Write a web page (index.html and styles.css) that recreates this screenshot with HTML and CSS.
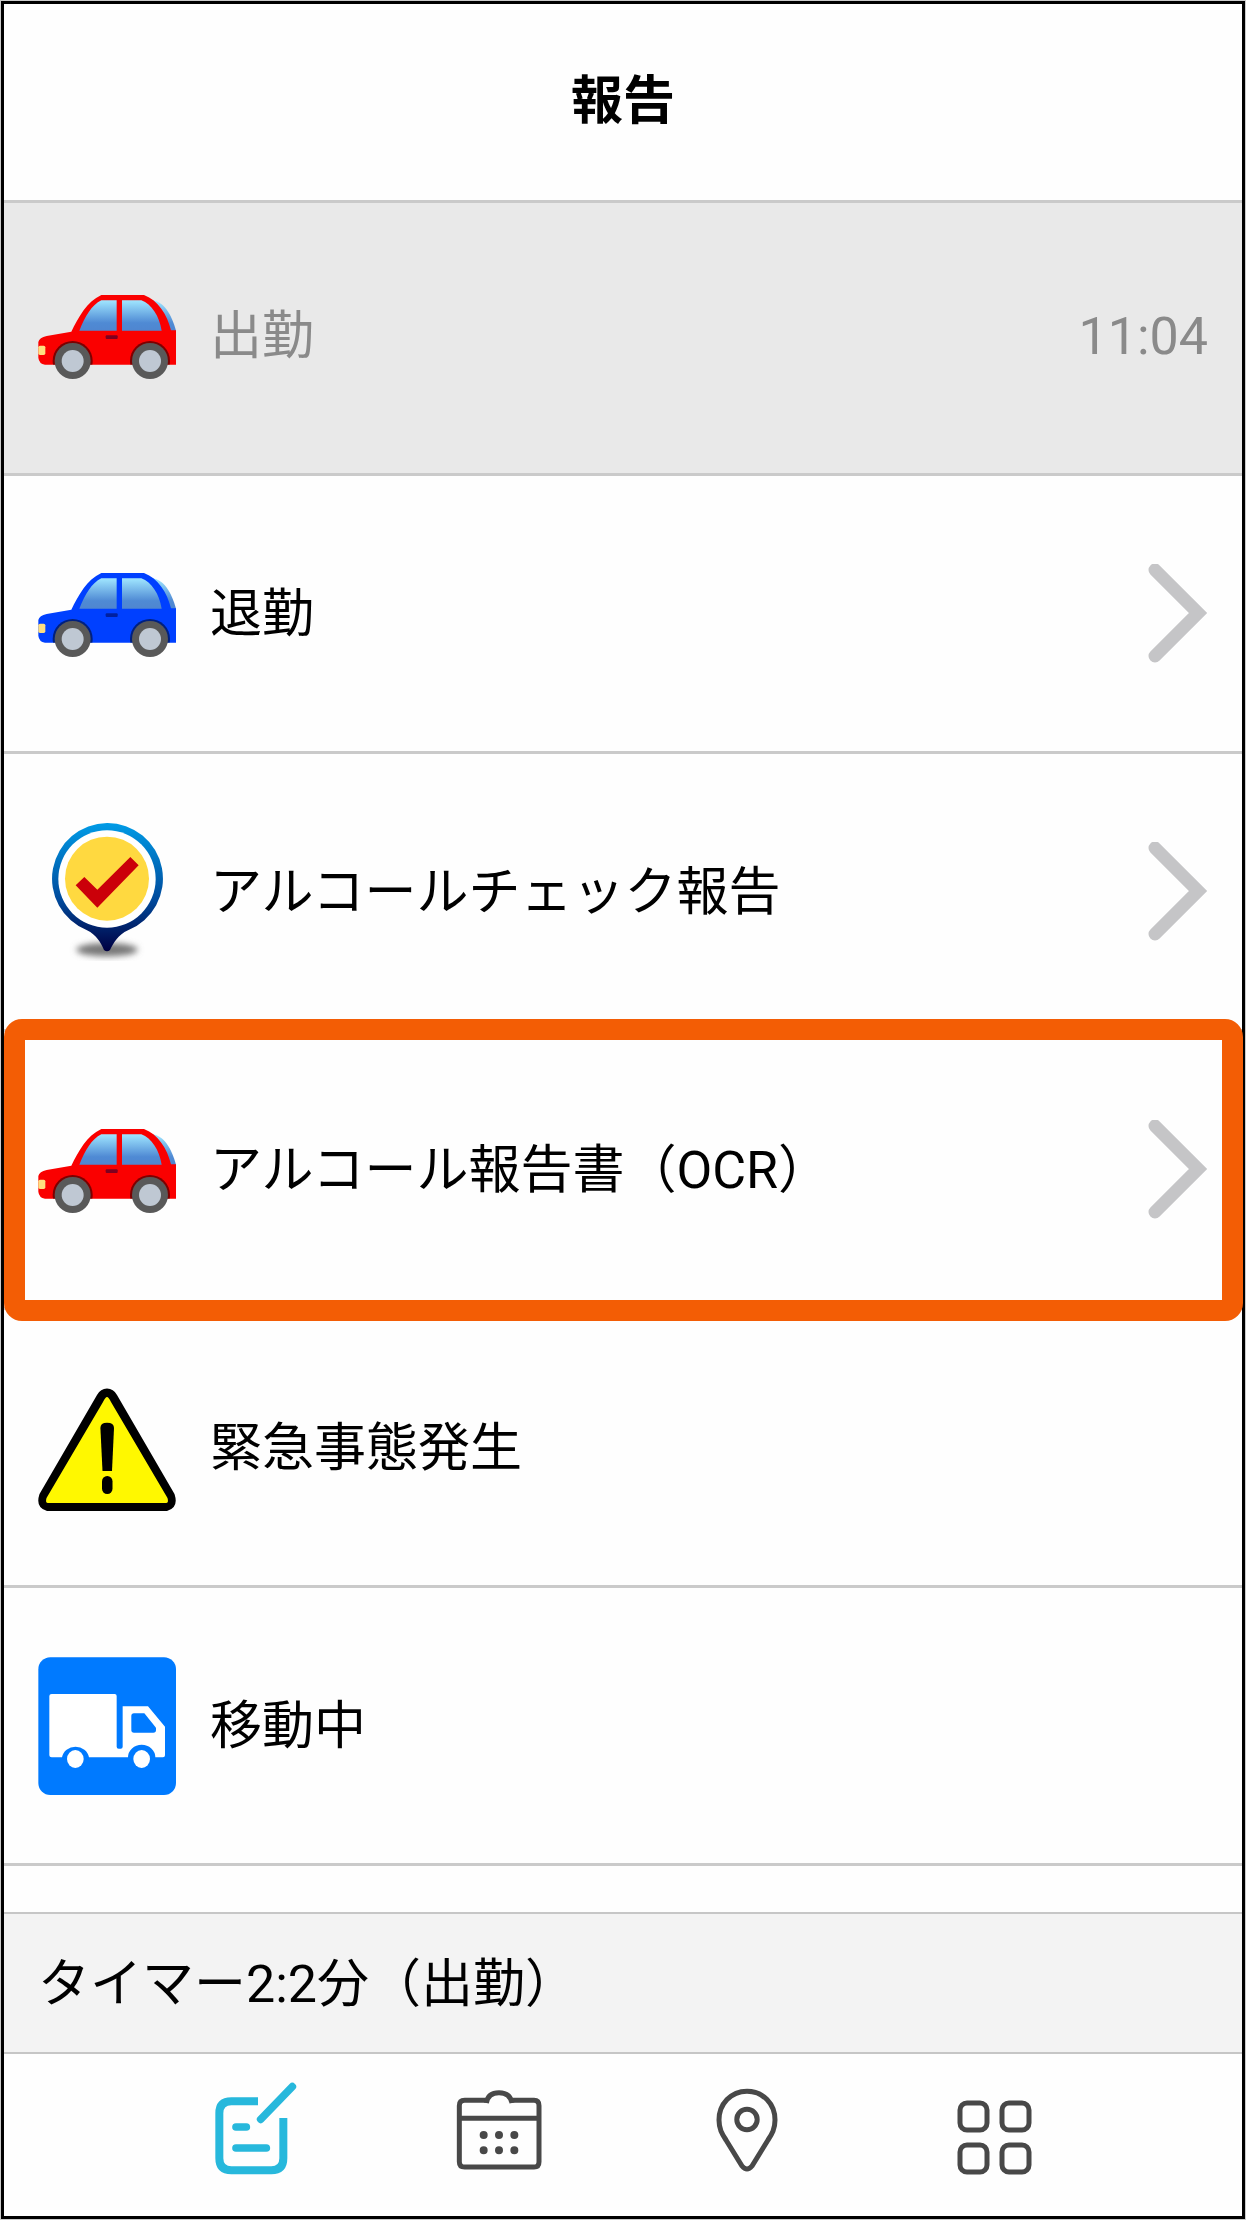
FILE: index.html
```html
<!DOCTYPE html>
<html lang="ja">
<head>
<meta charset="utf-8">
<meta name="viewport" content="width=device-width, initial-scale=1">
<title>報告</title>
<link rel="stylesheet" href="styles.css">
</head>
<body>
<svg class="defs" aria-hidden="true">
  <defs>
    <linearGradient id="glass" x1="0" y1="118" x2="0" y2="208" gradientUnits="userSpaceOnUse">
      <stop offset="0" stop-color="#a0e6ff"/>
      <stop offset="0.75" stop-color="#4f8ad4"/>
      <stop offset="1" stop-color="#4f86d0"/>
    </linearGradient>
    <linearGradient id="pin-ring" x1="0" y1="67" x2="0" y2="450" gradientUnits="userSpaceOnUse">
      <stop offset="0" stop-color="#009be6"/>
      <stop offset="0.6" stop-color="#004a9c"/>
      <stop offset="1" stop-color="#000042"/>
    </linearGradient>
    <filter id="soft" x="-30%" y="-80%" width="160%" height="260%"><feGaussianBlur stdDeviation="9"/></filter>
    <clipPath id="car-body"><rect x="115" y="209" width="413" height="102"/></clipPath>
    <symbol id="car" viewBox="114 18 414 414">
      <path d="M455 118 C490 120 515 160 528 210 H500Z" fill="url(#glass)"/>
      <path d="M115 243 Q118 230 140 225 L214 212 C235 170 260 122 304 102 H432 C475 118 502 162 513 208 H528 V311 H135 Q117 308 115 290Z" fill="currentColor"/>
      <path d="M350 118 H304 C275 132 256 165 238 209 H350Z M366 118 H424 C455 130 478 165 485 209 H366Z" fill="url(#glass)"/>
      <rect x="317" y="223" width="36" height="11" rx="3" fill="#000040" opacity="0.5"/>
      <g clip-path="url(#car-body)" fill="#000000" opacity="0.5"><circle cx="218" cy="300" r="60"/><circle cx="450" cy="300" r="60"/></g>
      <g fill="#595959"><circle cx="218" cy="300" r="54"/><circle cx="450" cy="300" r="54"/></g>
      <g fill="#bfc8d3"><circle cx="218" cy="300" r="33"/><circle cx="450" cy="300" r="33"/></g>
      <rect x="115" y="254" width="21" height="28" rx="5" fill="#ffdf80"/>
    </symbol>
    <symbol id="chevron" viewBox="0 0 60 100">
      <path d="M7 6 L50 49 L7 92" fill="none" stroke="#c5c5c7" stroke-width="13" stroke-linecap="round"/>
    </symbol>
  </defs>
</svg>

<div class="screen">
  <header class="header">
    <h1 class="title">報告</h1>
  </header>

  <main class="main">
    <ul class="list">
      <li class="item">
        <button class="row row-done" type="button" disabled>
          <svg class="icon car-red" aria-hidden="true"><use href="#car"/></svg>
          <span class="label">出勤</span>
          <span class="time">11:04</span>
        </button>
      </li>
      <li class="item">
        <button class="row" type="button">
          <svg class="icon car-blue" aria-hidden="true"><use href="#car"/></svg>
          <span class="label">退勤</span>
          <svg class="chevron" aria-hidden="true"><use href="#chevron"/></svg>
        </button>
      </li>
      <li class="item">
        <button class="row" type="button">
          <svg class="icon" viewBox="115 67 414 414" aria-hidden="true">
            <ellipse cx="322" cy="447" rx="92" ry="20" fill="#777777" filter="url(#soft)"/>
            <path d="M322 67 A167 167 0 0 1 385 389 C355 403 343 425 331 448 Q322 456 313 448 C303 425 290 403 262 389 A167 167 0 0 1 322 67Z" fill="url(#pin-ring)"/>
            <circle cx="322" cy="235" r="146" fill="#ffffff"/>
            <circle cx="322" cy="234" r="126" fill="#ffd940"/>
            <path d="M228 254 L254 229 L293 267 L392 169 L417 194 L293 321Z" fill="#cb0009"/>
          </svg>
          <span class="label">アルコールチェック報告</span>
          <svg class="chevron" aria-hidden="true"><use href="#chevron"/></svg>
        </button>
      </li>
      <li class="item item-marked">
        <button class="row" type="button">
          <svg class="icon car-red" aria-hidden="true"><use href="#car"/></svg>
          <span class="label">アルコール報告書（OCR）</span>
          <svg class="chevron" aria-hidden="true"><use href="#chevron"/></svg>
        </button>
      </li>
      <li class="item">
        <button class="row" type="button">
          <svg class="icon" viewBox="0 0 138 138" aria-hidden="true">
            <path d="M69 9.5 Q75.5 9.5 79 16 L136.5 115 Q141 129 129 132 H9 Q-3 129 1.500 115 L59 16 Q62.500 9.500 69 9.500Z" fill="#000000"/>
            <path d="M69 18 Q70.500 18 73 23 L129.500 119 Q131 124 128 124 H10 Q7 124 8.500 119 L65 23 Q67.500 18 69 18Z" fill="#fff800"/>
            <path d="M62.400 49 Q62.400 43.700 69 43.700 Q76 43.700 76 49 L74 92 H64.500Z" fill="#000000"/>
            <rect x="64" y="97" width="10.500" height="18" rx="5.200" fill="#000000"/>
          </svg>
          <span class="label">緊急事態発生</span>
        </button>
      </li>
      <li class="item">
        <button class="row" type="button">
          <svg class="icon" viewBox="114 53 414 414" aria-hidden="true">
            <rect x="115" y="54" width="413" height="413" rx="36" fill="#007aff"/>
            <path d="M155 164 H344 Q350 164 350 170 V322 Q350 328 356 328 H362 Q368 328 368 322 V201 H444 L495 262 V348 Q495 354 489 354 H466 A41 38 0 0 0 384 354 H267 A41 38 0 0 0 186 354 H155 Q148 354 148 348 V170 Q148 164 155 164Z" fill="#ffffff"/>
            <path d="M402 222 H433 L468 265 V272 Q468 280 460 280 H402 Q394 280 394 272 V230 Q394 222 402 222Z" fill="#007aff"/>
            <ellipse cx="226" cy="359" rx="25" ry="27" fill="#ffffff"/>
            <ellipse cx="425" cy="359" rx="25" ry="27" fill="#ffffff"/>
          </svg>
          <span class="label">移動中</span>
        </button>
      </li>
    </ul>
  </main>

  <footer class="footer">
    <p class="timer">タイマー2:2分（出勤）</p>
    <nav class="nav">
      <a class="tab tab-current" href="#report" aria-label="報告" aria-current="page">
        <svg class="tab-icon" viewBox="67 60 300 300" aria-hidden="true">
          <path d="M235 124 H155 Q119 124 119 160 V295 Q119 331 155 331 H275 Q311 331 311 295 V174" stroke-width="24"/>
          <path d="M243 178 L338 80 M169 201 H200 M169 264 H260" stroke-width="23" stroke-linecap="round"/>
        </svg>
      </a>
      <a class="tab" href="#calendar" aria-label="カレンダー">
        <svg class="tab-icon" viewBox="807 60 300 300" aria-hidden="true">
          <path d="M924 121 H854 Q838 121 838 137 V305 Q838 321 854 321 H1062 Q1077 321 1077 305 V137 Q1077 121 1062 121 H992" stroke-width="15"/>
          <path d="M919 129 Q924 98 957 98 Q990 98 996 129 M838 175 H1077" stroke-width="15"/>
          <path d="M911 225 h0 M957 225 h0 M1003 225 h0 M911 271 h0 M957 271 h0 M1003 271 h0" stroke-width="24" stroke-linecap="round"/>
        </svg>
      </a>
      <a class="tab" href="#map" aria-label="地図">
        <svg class="tab-icon" viewBox="0 0 100 100" aria-hidden="true">
          <path d="M50 11.200 C66 11.200 78 24 78 40 C78 49 75 54 71 60 L55 86 Q50 92 45 86 L29 60 C25 54 22 49 22 40 C22 24 34 11.200 50 11.200Z" stroke-width="5"/>
          <circle cx="50" cy="39.500" r="10.200" stroke-width="5"/>
        </svg>
      </a>
      <a class="tab" href="#menu" aria-label="メニュー">
        <svg class="tab-icon" viewBox="-1 0 100 100" aria-hidden="true">
          <g stroke-width="5">
            <rect x="15" y="23" width="27" height="27" rx="7"/><rect x="57" y="23" width="27" height="27" rx="7"/>
            <rect x="15" y="65" width="27" height="27" rx="7"/><rect x="57" y="65" width="27" height="27" rx="7"/>
          </g>
        </svg>
      </a>
    </nav>
  </footer>
</div>
</body>
</html>
```
FILE: styles.css
```css
* {
  box-sizing: border-box;
}

body {
  margin: 0;
  padding: 1px;
  background: #cccccc;
  color: #000000;
  font: 400 52px/60px Roboto, "Noto Sans CJK JP", sans-serif;
}

.defs {
  position: absolute;
  width: 0;
  height: 0;
}

.screen {
  display: flex;
  flex-direction: column;
  min-height: calc(100vh - 2px);
  border: 3px solid #000000;
  background: #fefefe;
}

.header {
  position: relative;
  z-index: 1;
  padding: 68px 34px;
  border-bottom: 3px solid #cacaca;
  background: #fefefe;
  text-align: center;
}

.title {
  margin: 0;
  font-size: 52px;
  font-weight: 700;
}

.main {
  flex: 1;
  margin-top: -5px;
}

.list {
  margin: 0;
  padding: 0;
  list-style: none;
}

.item {
  position: relative;
  border-bottom: 3px solid #cacaca;
}

/* Thick frame that marks the entry and overlaps its neighbours */
.item-marked::after {
  content: "";
  position: absolute;
  z-index: 1;
  inset: -13px -1px -14px 0;
  border: 21px solid #f35d05;
  border-radius: 18px;
  pointer-events: none;
}

.row {
  display: flex;
  align-items: center;
  gap: 34px;
  width: 100%;
  min-height: 275px;
  padding: 34px;
  border: 0;
  background: none;
  color: inherit;
  font: inherit;
  text-align: left;
}

.row-done {
  background: #e9e9e9;
  color: #8a8a8a;
}

.icon {
  flex: none;
  width: 138px;
  height: 138px;
}

.car-red {
  color: #fa0000;
}

.car-blue {
  color: #0040ff;
}

.label {
  flex: 1;
  padding-top: 3px;
}

.time {
  padding-top: 3px;
}

.chevron {
  flex: none;
  width: 60px;
  height: 100px;
}

.timer {
  margin: 0;
  padding: 41px 34px 37px;
  border-top: 2px solid #c6c6c6;
  border-bottom: 2px solid #c6c6c6;
  background: #f3f3f3;
}

.nav {
  display: grid;
  grid-template-columns: repeat(4, 1fr);
  padding: 26px 10% 36px;
}

.tab {
  display: flex;
  justify-content: center;
  color: #484848;
}

.tab-current {
  color: #27b8dc;
}

.tab-icon {
  width: 100px;
  height: 100px;
  fill: none;
  stroke: currentColor;
}
```
